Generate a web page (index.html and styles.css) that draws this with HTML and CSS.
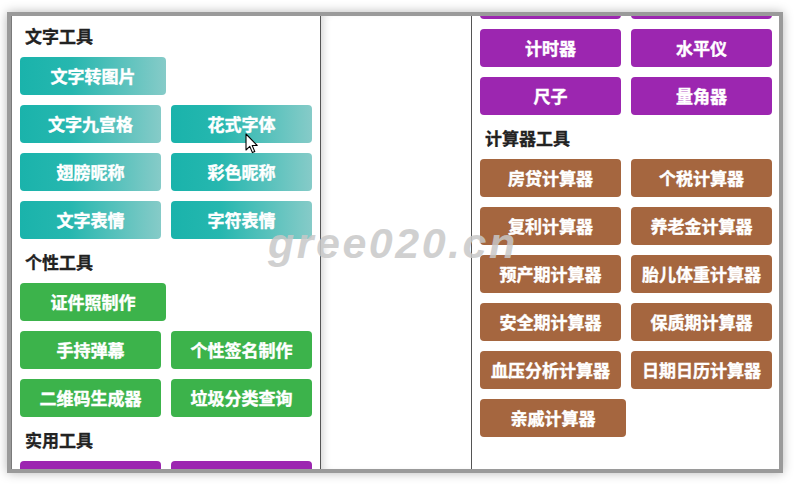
FILE: index.html
```html
<!DOCTYPE html>
<html lang="zh-CN">
<head>
<meta charset="utf-8">
<title>工具</title>
<link rel="stylesheet" href="styles.css">
</head>
<body>
<div class="frame">
  <div class="panel left">
    <div class="content">
      <section class="sec">
        <h3 class="title">文字工具</h3>
        <div class="grid">
          <div class="btn teal solo">文字转图片</div>
          <div class="btn teal">文字九宫格</div>
          <div class="btn teal">花式字体</div>
          <div class="btn teal">翅膀昵称</div>
          <div class="btn teal">彩色昵称</div>
          <div class="btn teal">文字表情</div>
          <div class="btn teal">字符表情</div>
        </div>
      </section>
      <section class="sec">
        <h3 class="title">个性工具</h3>
        <div class="grid">
          <div class="btn green solo">证件照制作</div>
          <div class="btn green">手持弹幕</div>
          <div class="btn green">个性签名制作</div>
          <div class="btn green">二维码生成器</div>
          <div class="btn green">垃圾分类查询</div>
        </div>
      </section>
      <section class="sec">
        <h3 class="title">实用工具</h3>
        <div class="grid">
          <div class="btn purple"></div>
          <div class="btn purple"></div>
        </div>
      </section>
    </div>
  </div>
  <div class="panel middle"></div>
  <div class="panel right">
    <div class="content scrolled">
      <section class="sec">
        <div class="grid">
          <div class="btn purple"></div>
          <div class="btn purple"></div>
          <div class="btn purple">计时器</div>
          <div class="btn purple">水平仪</div>
          <div class="btn purple">尺子</div>
          <div class="btn purple">量角器</div>
        </div>
      </section>
      <section class="sec">
        <h3 class="title">计算器工具</h3>
        <div class="grid">
          <div class="btn brown">房贷计算器</div>
          <div class="btn brown">个税计算器</div>
          <div class="btn brown">复利计算器</div>
          <div class="btn brown">养老金计算器</div>
          <div class="btn brown">预产期计算器</div>
          <div class="btn brown">胎儿体重计算器</div>
          <div class="btn brown">安全期计算器</div>
          <div class="btn brown">保质期计算器</div>
          <div class="btn brown">血压分析计算器</div>
          <div class="btn brown">日期日历计算器</div>
          <div class="btn brown solo">亲戚计算器</div>
        </div>
      </section>
    </div>
  </div>
</div>
<div class="watermark">gree020.cn</div>
<svg class="cursor" width="14" height="21" viewBox="0 0 14 21" aria-hidden="true">
  <path d="M1 1 L1 17 L4.8 13.4 L7.4 19.6 L9.8 18.6 L7.2 12.5 L12.2 12.5 Z" fill="#fff" stroke="#000" stroke-width="1.1" stroke-linejoin="round"/>
</svg>
</body>
</html>
```
FILE: styles.css
```css
html, body {
  margin: 0;
  padding: 0;
  background: #ffffff;
}
body {
  width: 800px;
  height: 486px;
  position: relative;
  overflow: hidden;
  font-family: "Noto Sans CJK SC", "Liberation Sans", sans-serif;
}
.frame {
  position: absolute;
  left: 7px;
  top: 12px;
  width: 768px;
  height: 453px;
  border: 4px solid #9a9a9a;
  box-shadow: 0 0 10px rgba(0, 0, 0, 0.28);
  display: flex;
  overflow: hidden;
  background: #fff;
}
.panel {
  height: 100%;
  overflow: hidden;
  box-sizing: border-box;
  background: #fff;
}
.left {
  width: 310px;
  border-left: 1px solid #7a7a7a;
  border-right: 1px solid #555;
  padding: 5px 8px 0 8px;
}
.middle {
  width: 151px;
  border-right: 1px solid #555;
  box-shadow: inset 7px 0 8px -5px rgba(0, 0, 0, 0.18);
}
.right {
  width: 307px;
  padding: 0 7px 0 8px;
}
.content {
  width: 292px;
}
.scrolled {
  margin-top: -35px;
}
.title {
  margin: 8px 0 6px 5px;
  height: 30px;
  line-height: 30px;
  font-size: 17px;
  font-weight: 700;
  color: #222;
  -webkit-text-stroke: 0.3px #222;
}
.sec:first-child .title {
  margin-top: 0;
}
.grid {
  display: flex;
  flex-wrap: wrap;
  gap: 10px;
}
.btn {
  flex: 0 0 141px;
  height: 38px;
  line-height: 38px;
  border-radius: 4px;
  text-align: center;
  color: #fff;
  font-size: 17px;
  font-weight: 700;
  white-space: nowrap;
  -webkit-text-stroke: 0.4px #fff;
}
.solo {
  flex-basis: 146px;
  margin-right: 146px;
}
.teal {
  background: linear-gradient(to right, #1ab3ab 0%, #26b7af 35%, #86cbc8 100%);
}
.green {
  background: #3cb34b;
}
.purple {
  background: #9c26b0;
}
.brown {
  background: #a5663f;
}
.watermark {
  position: absolute;
  left: 268px;
  top: 222px;
  font-family: "Liberation Sans", Arial, sans-serif;
  font-style: italic;
  font-weight: 700;
  font-size: 43px;
  line-height: 42px;
  letter-spacing: 2.5px;
  color: rgba(200, 200, 200, 0.85);
  pointer-events: none;
}
.cursor {
  position: absolute;
  left: 245px;
  top: 133px;
}
```
